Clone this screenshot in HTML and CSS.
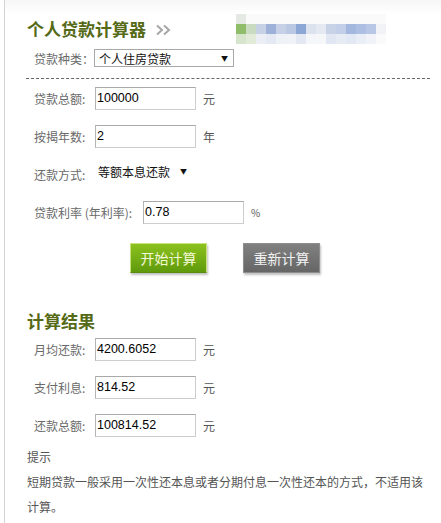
FILE: index.html
```html
<!DOCTYPE html>
<html lang="zh-CN">
<head>
<meta charset="utf-8">
<title>个人贷款计算器</title>
<link rel="stylesheet" href="styles.css">
</head>
<body>
<div class="page">
  <div class="header">
    <h1 class="title">个人贷款计算器</h1>
    <svg class="chev" width="16" height="12" viewBox="0 0 16 12">
      <path d="M1 1.5 L6 6 L1 10.5" fill="none" stroke="#a6a6a6" stroke-width="2"/>
      <path d="M8 1.5 L13 6 L8 10.5" fill="none" stroke="#a6a6a6" stroke-width="2"/>
    </svg>
    <svg class="mosaic" width="150" height="30" viewBox="0 0 150 30">
      <rect x="0" y="0" width="10" height="10" fill="#e4e9e3"/>
      <rect x="10" y="0" width="140" height="10" fill="#fafafa"/>
      <rect x="0" y="10" width="10" height="10" fill="#8fbd6a"/>
      <rect x="10" y="10" width="10" height="10" fill="#c9dcc1"/>
      <rect x="20" y="10" width="10" height="10" fill="#c6d1e5"/>
      <rect x="30" y="10" width="10" height="10" fill="#9db1d9"/>
      <rect x="40" y="10" width="10" height="10" fill="#c6d1e7"/>
      <rect x="50" y="10" width="10" height="10" fill="#bac8e4"/>
      <rect x="60" y="10" width="10" height="10" fill="#8ca6d6"/>
      <rect x="70" y="10" width="10" height="10" fill="#dce3ef"/>
      <rect x="80" y="10" width="10" height="10" fill="#e5eaf2"/>
      <rect x="90" y="10" width="10" height="10" fill="#c8d3e8"/>
      <rect x="100" y="10" width="10" height="10" fill="#c3cfe8"/>
      <rect x="110" y="10" width="10" height="10" fill="#a3b7df"/>
      <rect x="120" y="10" width="10" height="10" fill="#adbfe3"/>
      <rect x="130" y="10" width="10" height="10" fill="#b8c7e6"/>
      <rect x="140" y="10" width="10" height="10" fill="#f1f3f7"/>
      <rect x="0" y="20" width="10" height="10" fill="#d6e5cb"/>
      <rect x="10" y="20" width="10" height="10" fill="#e1ebd8"/>
      <rect x="20" y="20" width="10" height="10" fill="#ebeff5"/>
      <rect x="30" y="20" width="10" height="10" fill="#e4e9f3"/>
      <rect x="40" y="20" width="10" height="10" fill="#eef1f6"/>
      <rect x="50" y="20" width="10" height="10" fill="#f0f2f7"/>
      <rect x="60" y="20" width="10" height="10" fill="#e3e8f2"/>
      <rect x="70" y="20" width="10" height="10" fill="#f4f6f9"/>
      <rect x="80" y="20" width="10" height="10" fill="#f6f7f9"/>
      <rect x="90" y="20" width="10" height="10" fill="#e2e8f3"/>
      <rect x="100" y="20" width="10" height="10" fill="#e6ebf4"/>
      <rect x="110" y="20" width="10" height="10" fill="#e3e9f4"/>
      <rect x="120" y="20" width="10" height="10" fill="#eaeef6"/>
      <rect x="130" y="20" width="10" height="10" fill="#f1f3f8"/>
      <rect x="140" y="20" width="10" height="10" fill="#fafafb"/>
    </svg>
  </div>

  <div class="type-row">
    <span class="label">贷款种类：</span>
    <div class="select">
      <span>个人住房贷款</span>
      <span class="arrow">▼</span>
    </div>
  </div>

  <div class="divider"></div>

  <div class="row">
    <span class="label">贷款总额:</span>
    <div class="input">100000</div>
    <span class="unit">元</span>
  </div>
  <div class="row">
    <span class="label">按揭年数:</span>
    <div class="input">2</div>
    <span class="unit">年</span>
  </div>
  <div class="row">
    <span class="label">还款方式:</span>
    <div class="plain-select">等额本息还款<span class="arrow">▼</span></div>
  </div>
  <div class="row">
    <span class="label label-wide">贷款利率 (年利率):</span>
    <div class="input">0.78</div>
    <span class="unit unit-pct">%</span>
  </div>

  <div class="buttons">
    <div class="btn btn-green">开始计算</div>
    <div class="btn btn-gray">重新计算</div>
  </div>

  <h2 class="title result-title">计算结果</h2>

  <div class="row">
    <span class="label">月均还款:</span>
    <div class="input">4200.6052</div>
    <span class="unit">元</span>
  </div>
  <div class="row">
    <span class="label">支付利息:</span>
    <div class="input">814.52</div>
    <span class="unit">元</span>
  </div>
  <div class="row">
    <span class="label">还款总额:</span>
    <div class="input">100814.52</div>
    <span class="unit">元</span>
  </div>

  <div class="tips">
    <p>提示</p>
    <p>短期贷款一般采用一次性还本息或者分期付息一次性还本的方式，不适用该计算。</p>
  </div>
</div>
</body>
</html>
```

FILE: styles.css
```css
html, body {
  margin: 0;
  padding: 0;
  background: #fff;
}

body {
  font-family: "Noto Sans CJK SC", "Liberation Sans", sans-serif;
  font-size: 12px;
  color: #555;
}

.page {
  margin-left: 4px;
  border-left: 1px solid #d4d4d4;
  min-height: 523px;
  box-sizing: border-box;
  padding: 14px 0 0 22px;
  background: linear-gradient(#f6f6f6, #ffffff 14px);
}

.header {
  display: flex;
  align-items: center;
  height: 30px;
}

.title {
  margin: 0;
  font-size: 17px;
  line-height: 30px;
  font-weight: bold;
  color: #556a16;
  letter-spacing: 0;
}

.chev {
  margin-left: 10px;
  margin-top: 2px;
}

.mosaic {
  margin-left: 64px;
  display: block;
}

.type-row {
  display: flex;
  align-items: center;
  height: 28px;
  padding-left: 7px;
}

.type-row .label {
  width: 60px;
}

.select {
  width: 140px;
  height: 18px;
  box-sizing: border-box;
  border: 1px solid #a8a8a8;
  display: flex;
  align-items: center;
  justify-content: space-between;
  padding: 0 5px 0 4px;
  color: #111;
  font-size: 12px;
}

.arrow {
  font-size: 7px;
  color: #111;
}

.divider {
  margin: 6px 0 0 -1px;
  width: 404px;
  border-top: 1px dashed #666;
}

.row {
  display: flex;
  align-items: center;
  height: 38px;
  padding-left: 7px;
}

.label {
  width: 61px;
  color: #6a6a6a;
  white-space: nowrap;
}

.label-wide {
  width: 109px;
}

.input {
  width: 101px;
  height: 23px;
  box-sizing: border-box;
  border: 1px solid #cdcdcd;
  border-top-color: #a9a9a9;
  border-left-color: #b5b5b5;
  font-family: "Liberation Sans", Arial, sans-serif;
  font-size: 12.5px;
  line-height: 21px;
  padding: 0 1px;
  color: #000;
}

.unit {
  margin-left: 7px;
  color: #555;
}

.unit-pct {
  font-size: 10px;
  margin-left: 7px;
}

.plain-select {
  margin-left: 3px;
  margin-top: -6px;
  color: #111;
  display: flex;
  align-items: center;
}

.plain-select .arrow {
  margin-left: 10px;
}

.buttons {
  display: flex;
  margin-top: 12px;
  padding-left: 103px;
  gap: 36px;
}

.btn {
  width: 77px;
  height: 30px;
  box-sizing: border-box;
  display: flex;
  align-items: center;
  justify-content: center;
  color: #fff;
  font-size: 14px;
  box-shadow: 1px 2px 2px rgba(0, 0, 0, 0.25);
}

.btn-green {
  background: linear-gradient(#8cc21e, #5f9a0c);
  border: 1px solid #c9e27a;
  border-bottom-color: #5a8c10;
  color: #f4f9d8;
}

.btn-gray {
  background: linear-gradient(#808080, #666666);
  border: 1px solid #8e8e8e;
  color: #f2f2f2;
}

.result-title {
  margin-top: 39px;
  line-height: 18px;
  height: 18px;
}

.tips {
  width: 400px;
  line-height: 25px;
  color: #555;
}

.tips p {
  margin: 0;
}
```
